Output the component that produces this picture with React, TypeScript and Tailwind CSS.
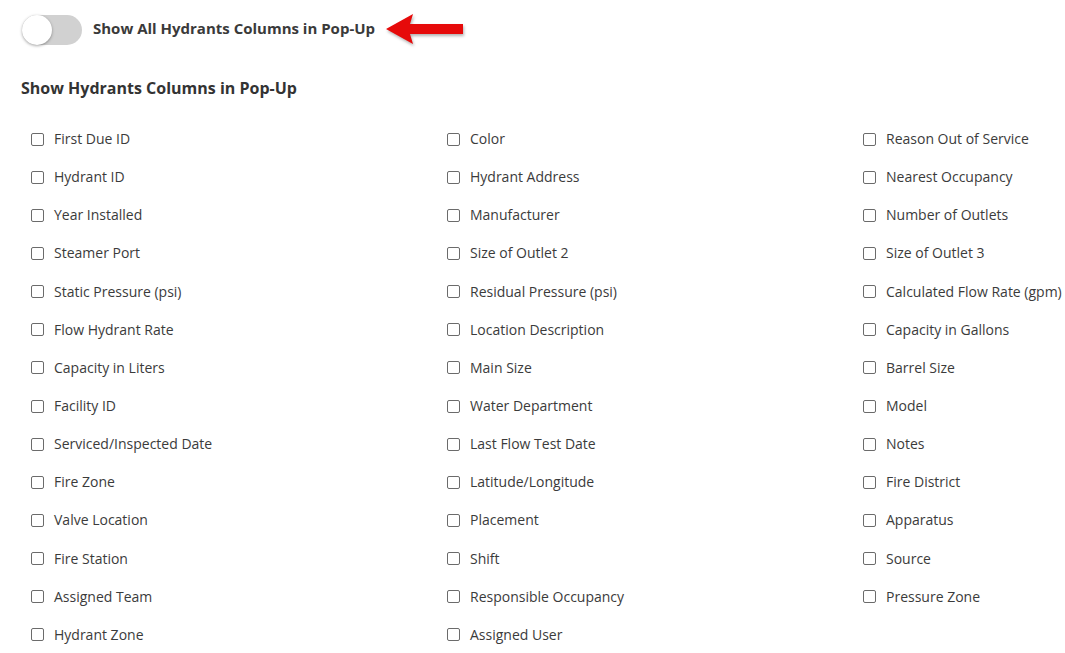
import React from "react";

const items = [
  "First Due ID", "Color", "Reason Out of Service",
  "Hydrant ID", "Hydrant Address", "Nearest Occupancy",
  "Year Installed", "Manufacturer", "Number of Outlets",
  "Steamer Port", "Size of Outlet 2", "Size of Outlet 3",
  "Static Pressure (psi)", "Residual Pressure (psi)", "Calculated Flow Rate (gpm)",
  "Flow Hydrant Rate", "Location Description", "Capacity in Gallons",
  "Capacity in Liters", "Main Size", "Barrel Size",
  "Facility ID", "Water Department", "Model",
  "Serviced/Inspected Date", "Last Flow Test Date", "Notes",
  "Fire Zone", "Latitude/Longitude", "Fire District",
  "Valve Location", "Placement", "Apparatus",
  "Fire Station", "Shift", "Source",
  "Assigned Team", "Responsible Occupancy", "Pressure Zone",
  "Hydrant Zone", "Assigned User",
];

export default function App() {
  return (
    <div
      className="w-[1065px] h-[653px] bg-white overflow-hidden text-[#333]"
      style={{ fontFamily: '"Open Sans", "Liberation Sans", sans-serif' }}
    >
      <div className="flex items-center pt-[15px] pl-[22px] h-[45px]">
        <div className="relative w-[60px] h-[30px] rounded-full bg-[#d1d1d1] shrink-0">
          <div className="absolute left-0 top-0 w-[30px] h-[30px] rounded-full bg-white shadow-[0_1px_3px_rgba(0,0,0,0.35)]" />
        </div>
        <span className="relative -top-[2px] ml-[11px] text-[15px] font-bold text-[#3a3a3a] leading-none">
          Show All Hydrants Columns in Pop-Up
        </span>
        <svg width="82" height="36" viewBox="0 0 82 36" className="ml-[10px] mt-[1px]" style={{ filter: "drop-shadow(1px 2px 1.5px rgba(0,0,0,0.3))" }}>
          <polygon points="1,16 28,1 25,11 78,11 78,21 25,21 28,31" fill="#e60a0a" />
        </svg>
      </div>
      <div className="pl-[21px] mt-[33px] text-[16px] font-bold text-[#333] leading-[20px]">
        Show Hydrants Columns in Pop-Up
      </div>
      <div className="grid grid-cols-[416px_416px_1fr] pl-[31px] mt-[22px]">
        {items.map((label) => (
          <div key={label} className="flex items-center h-[38.15px]">
            <span className="w-[13px] h-[13px] border border-[#6b6b6b] rounded-[2px] bg-white shrink-0" />
            <span className="ml-[10px] text-[14px] text-[#3b3b3b] leading-none whitespace-nowrap">
              {label}
            </span>
          </div>
        ))}
      </div>
    </div>
  );
}
